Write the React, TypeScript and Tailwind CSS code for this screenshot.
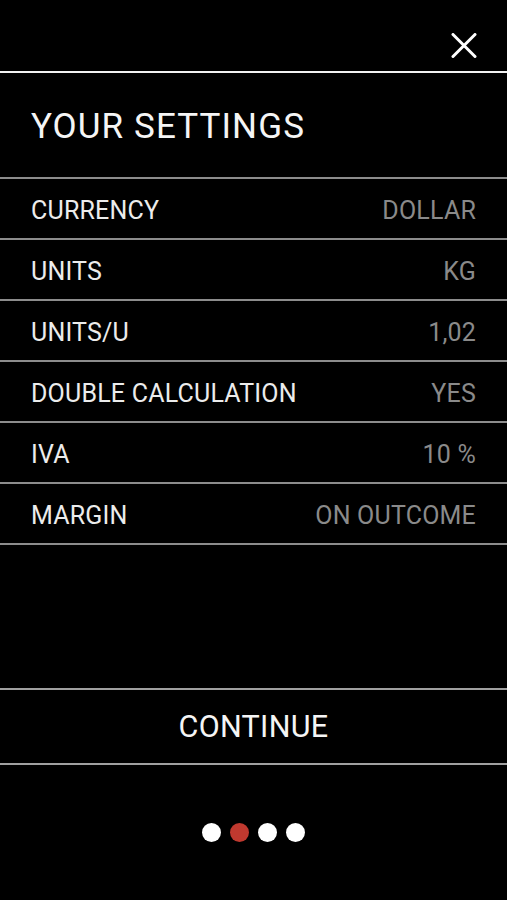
const rows: { label: string; value: string }[] = [
  { label: 'CURRENCY', value: 'DOLLAR' },
  { label: 'UNITS', value: 'KG' },
  { label: 'UNITS/U', value: '1,02' },
  { label: 'DOUBLE CALCULATION', value: 'YES' },
  { label: 'IVA', value: '10 %' },
  { label: 'MARGIN', value: 'ON OUTCOME' },
];

function CloseIcon() {
  return (
    <svg width="26" height="25" viewBox="0 0 26 25" fill="none">
      <path d="M2 1.5 L24 23.5 M24 1.5 L2 23.5" stroke="white" strokeWidth="3" strokeLinecap="round" />
    </svg>
  );
}

export default function App() {
  return (
    <div className="h-[900px] w-full bg-black flex flex-col text-white font-['Roboto',sans-serif]">
      <div className="h-[71px] flex justify-end items-start pt-[33px] pr-[30px] shrink-0">
        <CloseIcon />
      </div>
      <div className="h-[2px] bg-[#f2f2f2] shrink-0" />

      <div className="h-[104px] flex items-center px-[31px] shrink-0">
        <h1 className="text-[35px] tracking-[1.1px] leading-none text-[#f5f5f5] font-normal pt-[2px]">YOUR SETTINGS</h1>
      </div>
      <div className="h-[2px] bg-[#8c8c8c] shrink-0" />

      {rows.map((row) => (
        <div key={row.label} className="shrink-0">
          <div className="h-[59px] flex items-center justify-between px-[31px] pt-[3px]">
            <span className="text-[25px] tracking-[0.2px] text-[#ececec] leading-none">{row.label}</span>
            <span className="text-[25px] tracking-[0.2px] text-[#8a8a8a] leading-none">{row.value}</span>
          </div>
          <div className="h-[2px] bg-[#8c8c8c]" />
        </div>
      ))}

      <div className="h-[143px] shrink-0" />
      <div className="h-[2px] bg-[#a0a0a0] shrink-0" />
      <button className="h-[73px] flex items-center justify-center text-[30.5px] tracking-[0.3px] leading-none text-[#f5f5f5] shrink-0 pt-[2px]">
        CONTINUE
      </button>
      <div className="h-[2px] bg-[#a0a0a0] shrink-0" />

      <div className="flex justify-center gap-[9px] pt-[58px]">
        <span className="w-[19px] h-[19px] rounded-full bg-white" />
        <span className="w-[19px] h-[19px] rounded-full bg-[#c0392f]" />
        <span className="w-[19px] h-[19px] rounded-full bg-white" />
        <span className="w-[19px] h-[19px] rounded-full bg-white" />
      </div>
    </div>
  );
}
